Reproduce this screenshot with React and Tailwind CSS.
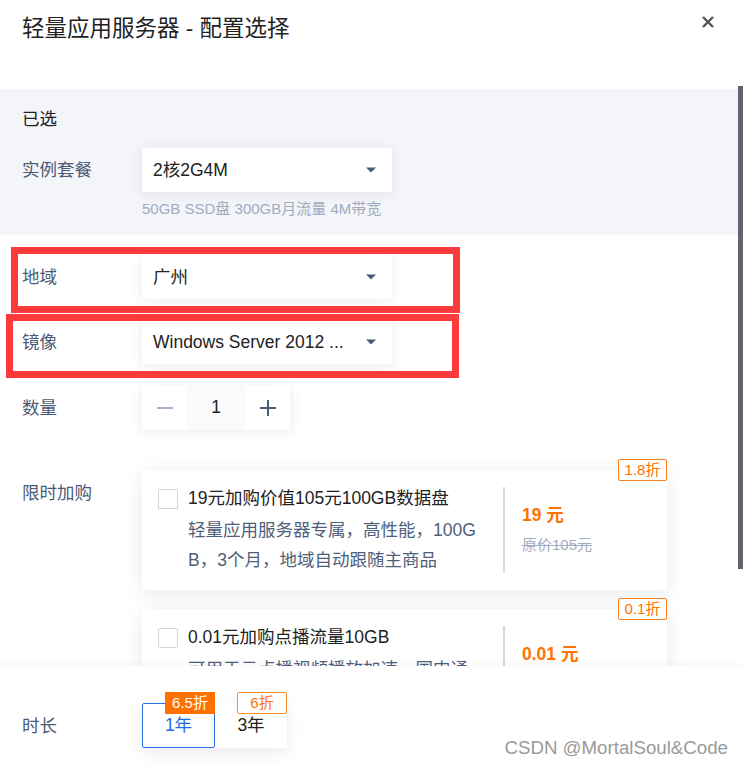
import React from 'react';

function Caret() {
  return (
    <svg width="10" height="6" viewBox="0 0 10 6" className="shrink-0">
      <path d="M0 0.5 H10 L5 5.5 Z" fill="#4b5a76" />
    </svg>
  );
}

function Select({ value }) {
  return (
    <div className="w-[250px] h-[44px] bg-white flex items-center justify-between pl-[11px] pr-[16px] shadow-[0_2px_12px_rgba(54,62,96,0.1)]">
      <span className="text-[#222] whitespace-nowrap">{value}</span>
      <Caret />
    </div>
  );
}

function Row({ label, children, className = '' }) {
  return (
    <div className={`flex items-center ${className}`}>
      <div className="w-[120px] shrink-0 text-[#4b5a76] leading-[24px]">{label}</div>
      {children}
    </div>
  );
}

function Stepper() {
  return (
    <div className="flex h-[45px] shadow-[0_2px_12px_rgba(54,62,96,0.1)]">
      <div className="w-[45px] bg-white flex items-center justify-center">
        <div className="w-[16px] h-[2px] bg-[#a8b2c8]" />
      </div>
      <div className="w-[58px] bg-[#f9fafc] flex items-center justify-center text-[#222]">1</div>
      <div className="w-[45px] bg-white flex items-center justify-center">
        <svg width="16" height="16" viewBox="0 0 16 16">
          <path d="M8 0 V16 M0 8 H16" stroke="#4b5a76" strokeWidth="2" />
        </svg>
      </div>
    </div>
  );
}

function AddonCard({ badge, title, desc, price, original }) {
  return (
    <div className="relative w-[525px] bg-white flex shadow-[0_4px_18px_rgba(54,62,96,0.11)]">
      <div className="absolute -top-[11px] right-0 w-[49px] h-[22px] border border-[#ff7d1a] rounded-[2px] bg-white text-[#ff7200] text-[15px] flex items-center justify-center">
        {badge}
      </div>
      <div className="flex gap-[10px] pl-[16px] pt-[13px] pb-[15px]">
        <div className="w-[20px] h-[20px] mt-[6px] border border-[#cdd4e2] rounded-[1px] bg-white shrink-0" />
        <div className="w-[293px]">
          <div className="leading-[30px] text-[#222]">{title}</div>
          <div className="mt-[2px] leading-[30px] text-[#4f5e7b] break-all">{desc}</div>
        </div>
      </div>
      <div className="ml-[22px] my-[17px] w-[2px] bg-[#d3d8e3]" />
      <div className="pl-[17px] flex flex-col justify-center">
        <div className="leading-[30px] font-bold text-[#ff7200]">{price}</div>
        <div className="leading-[30px] text-[15px] text-[#a3adc2] line-through">{original}</div>
      </div>
    </div>
  );
}

export default function App() {
  return (
    <div className="relative w-[743px] h-[765px] overflow-hidden bg-white text-[17.5px] font-['Liberation_Sans','Noto_Sans_CJK_SC',sans-serif]">
      <div className="h-[86px] px-[22px] pt-[14px] flex items-start justify-between">
        <h1 className="text-[22.5px] leading-[30px] text-[#222]">轻量应用服务器 - 配置选择</h1>
        <button className="mt-[2px] mr-[7px]">
          <svg width="12" height="12" viewBox="0 0 12 12">
            <path d="M1 1 L11 11 M11 1 L1 11" stroke="#555" strokeWidth="2.4" />
          </svg>
        </button>
      </div>

      <div className="flex h-[580px]">
        <div className="w-[738px] overflow-hidden pt-[3px]">
          <div className="bg-[#f3f5f9] px-[22px] pt-[18px] pb-[16px]">
            <div className="leading-[24px] text-[#222]">已选</div>
            <Row label="实例套餐" className="mt-[17px]">
              <Select value="2核2G4M" />
            </Row>
            <div className="pl-[120px] mt-[7px] leading-[20px] text-[15px] text-[#a1abc0]">
              50GB SSD盘 300GB月流量 4M带宽
            </div>
          </div>

          <div className="px-[22px] pt-[20px]">
            <Row label="地域">
              <Select value="广州" />
            </Row>
            <Row label="镜像" className="mt-[21px]">
              <Select value="Windows Server 2012 ..." />
            </Row>
            <Row label="数量" className="mt-[21px]">
              <Stepper />
            </Row>
            <div className="flex items-start mt-[40px]">
              <div className="w-[120px] shrink-0 pt-[11px] leading-[24px] text-[#4b5a76]">限时加购</div>
              <div className="flex flex-col gap-[19px] pb-[20px]">
                <AddonCard
                  badge="1.8折"
                  title="19元加购价值105元100GB数据盘"
                  desc="轻量应用服务器专属，高性能，100GB，3个月，地域自动跟随主商品"
                  price="19 元"
                  original="原价105元"
                />
                <AddonCard
                  badge="0.1折"
                  title="0.01元加购点播流量10GB"
                  desc="可用于云点播视频播放加速，国内通用，有效期1个月"
                  price="0.01 元"
                  original="原价10元"
                />
              </div>
            </div>
          </div>
        </div>
        <div className="w-[5px]">
          <div className="h-[483px] bg-[#63636e]" />
        </div>
      </div>

      <div className="relative h-[99px] bg-white flex items-center px-[22px] pt-[20px] shadow-[0_-2px_6px_rgba(54,62,96,0.04)]">
        <div className="w-[120px] shrink-0 text-[#4b5a76] leading-[24px]">时长</div>
        <div className="flex shadow-[0_4px_16px_rgba(54,62,96,0.1)]">
          <div className="relative w-[73px] h-[45px] border border-[#2f6fe6] rounded-[2px] bg-white text-[#1f6ae0] flex items-center justify-center">
            1年
            <div className="absolute -top-[12px] -right-px w-[50px] h-[22px] bg-[#ff7200] text-white text-[15px] flex items-center justify-center">
              6.5折
            </div>
          </div>
          <div className="relative w-[72px] h-[45px] bg-white text-[#222] flex items-center justify-center">
            3年
            <div className="absolute -top-[11px] right-0 w-[50px] h-[22px] border border-[#ff8a2a] rounded-[2px] bg-white text-[#ff7200] text-[15px] flex items-center justify-center">
              6折
            </div>
          </div>
        </div>
      </div>

      <div className="absolute left-[11px] top-[247px] w-[449px] h-[66px] border-[7px] border-[#ff3a3a] pointer-events-none" />
      <div className="absolute left-[6px] top-[314px] w-[453px] h-[64px] border-[7px] border-[#ff3a3a] pointer-events-none" />

      <div className="absolute right-[15px] bottom-[6px] leading-[22px] text-[18.7px] text-[#9a9a9a]">
        CSDN @MortalSoul&amp;Code
      </div>
    </div>
  );
}
